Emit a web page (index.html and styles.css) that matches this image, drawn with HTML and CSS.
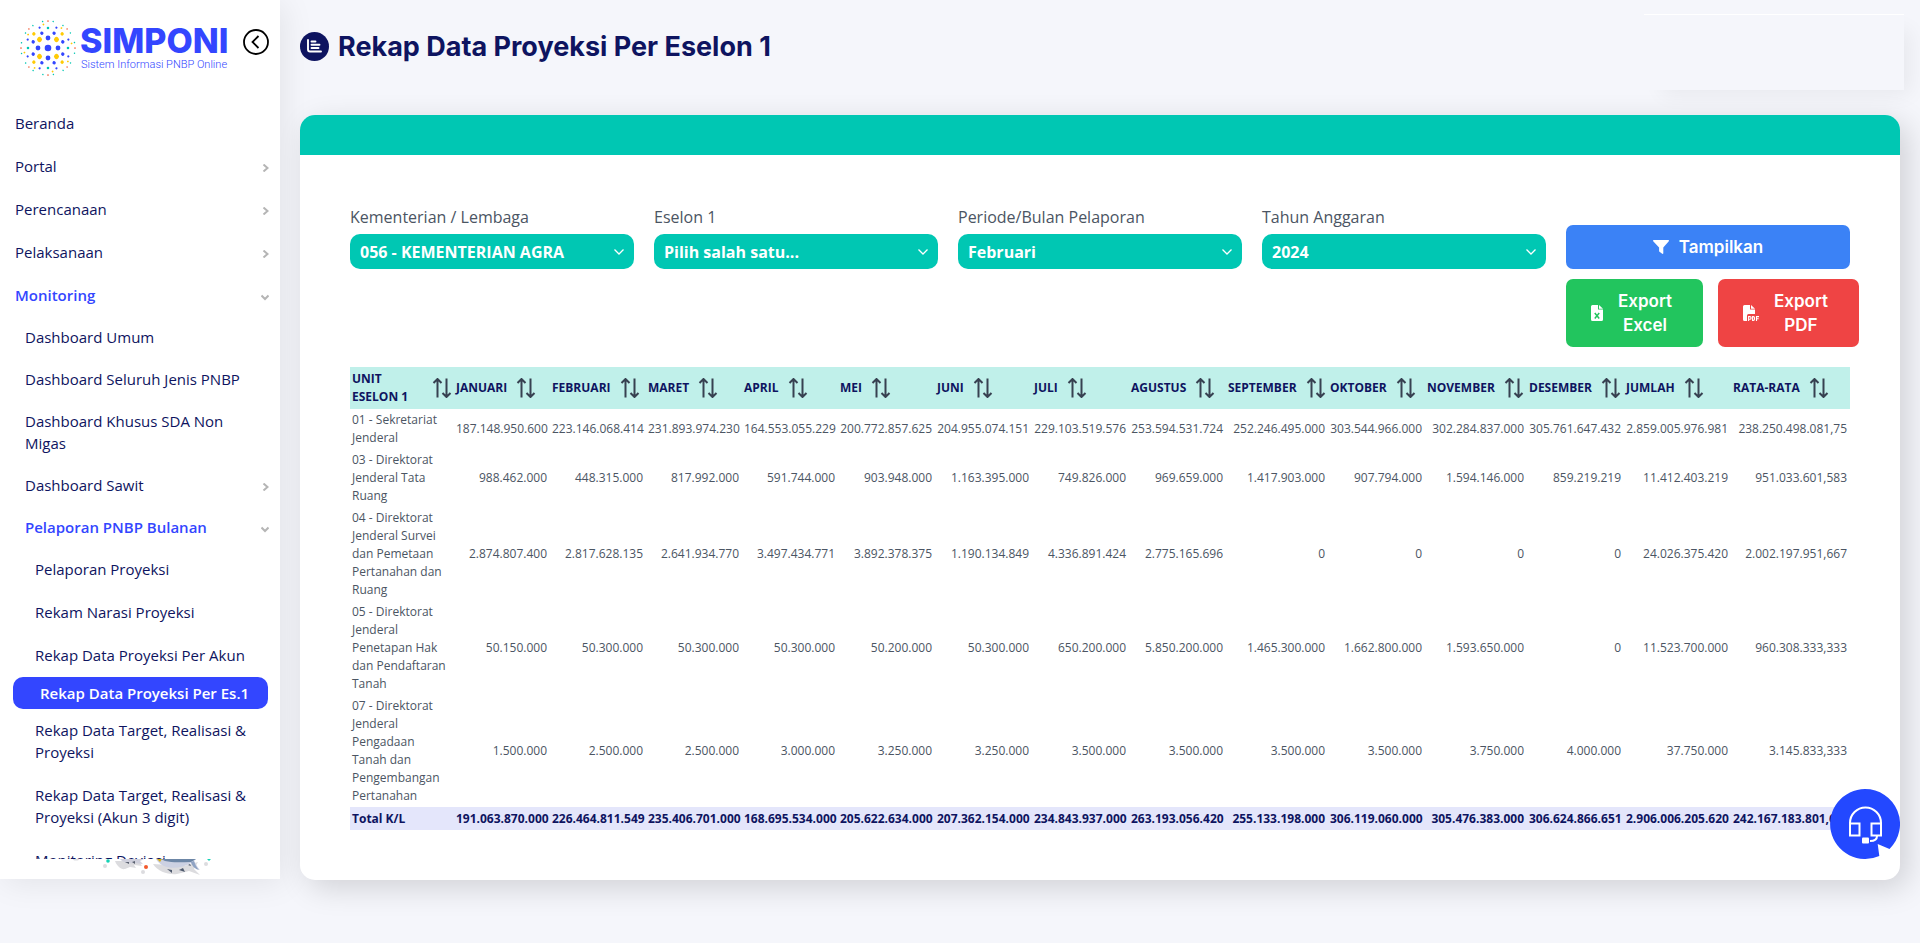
FILE: index.html
```html
<!DOCTYPE html>
<html lang="id">
<head>
    <meta charset="UTF-8">
    <meta name="viewport" content="width=device-width, initial-scale=1.0">
    <title>SIMPONI - Rekap Data Proyeksi Per Eselon 1</title>
    <link rel="stylesheet" href="styles.css">
</head>
<body>
    <!-- shared icons -->
    <svg class="sprite" aria-hidden="true">
        <symbol id="sort" viewBox="0 0 20 20">
            <path d="M5.500 19.500V1M1.500 5l4-4 4 4M14.500 .5V19M10.500 15l4 4 4-4" fill="none" stroke="currentColor" stroke-width="2"/>
        </symbol>
        <symbol id="right" viewBox="0 0 8 8">
            <path d="M2.500 .5 6.500 4 2.500 7.500" fill="none" stroke="currentColor" stroke-width="2"/>
        </symbol>
        <symbol id="down" viewBox="0 0 8 8">
            <path d="M.5 2.500 4 6 7.500 2.500" fill="none" stroke="currentColor" stroke-width="2"/>
        </symbol>
        <symbol id="caret" viewBox="0 0 12 12">
            <path d="M1.500 3.500 6 8l4.500-4.500" fill="none" stroke="currentColor" stroke-width="1.300"/>
        </symbol>
    </svg>

    <aside class="sidebar">
        <div class="brand">
            <svg class="brand-logo" viewBox="-29 -29 58 58" aria-hidden="true">
                <circle r="3.300" fill="#3346ff"/>
                <g class="dots">
                    <circle r="10" pathLength="4" stroke="#3346ff" stroke-width="4.800"/>
                    <circle r="12" pathLength="4" stroke="#ffcb05" stroke-width="5" transform="rotate(45)"/>
                    <circle r="16" pathLength="8" stroke="#3346ff" stroke-width="3.400" transform="rotate(22.500)"/>
                    <circle r="20" pathLength="4" stroke="#00c7b3" stroke-width="2.600"/>
                    <circle r="20" pathLength="4" stroke="#ffcb05" stroke-width="3.400" transform="rotate(45)"/>
                    <circle r="22" pathLength="8" stroke="#3346ff" stroke-width="2.200" transform="rotate(22.500)"/>
                    <circle r="24" pathLength="8" stroke="#ffcb05" stroke-width="1.800" transform="rotate(34)"/>
                    <circle r="27" pathLength="16" stroke="#00c7b3" stroke-width="1.500" transform="rotate(11)"/>
                    <circle r="27" pathLength="4" stroke="#f2603c" stroke-width="1.700"/>
                    <circle r="27" pathLength="4" stroke="#f2603c" stroke-width="1.500" transform="rotate(45)"/>
                </g>
            </svg>
            <div class="brand-text">
                <span class="brand-name">SIMPONI</span>
                <span class="brand-sub">Sistem Informasi PNBP Online</span>
            </div>
            <button class="toggle" type="button" aria-label="Tutup menu">
                <svg viewBox="0 0 26 26"><circle cx="13" cy="13" r="12" fill="none" stroke="#000" stroke-width="1.800"/><path d="M15.500 7 9.500 13l6 6" fill="none" stroke="#000" stroke-width="1.800"/></svg>
            </button>
        </div>

        <nav class="menu">
            <a href="#">Beranda</a>
            <a href="#">Portal <svg><use href="#right"/></svg></a>
            <a href="#">Perencanaan <svg><use href="#right"/></svg></a>
            <a href="#">Pelaksanaan <svg><use href="#right"/></svg></a>
            <a href="#" class="open">Monitoring <svg><use href="#down"/></svg></a>
            <div class="level-2">
                <a href="#">Dashboard Umum</a>
                <a href="#">Dashboard Seluruh Jenis PNBP</a>
                <a href="#">Dashboard Khusus SDA Non Migas</a>
                <a href="#">Dashboard Sawit <svg><use href="#right"/></svg></a>
                <a href="#" class="open">Pelaporan PNBP Bulanan <svg><use href="#down"/></svg></a>
            </div>
            <div class="level-3">
                <a href="#">Pelaporan Proyeksi</a>
                <a href="#">Rekam Narasi Proyeksi</a>
                <a href="#">Rekap Data Proyeksi Per Akun</a>
                <a href="#" class="active">Rekap Data Proyeksi Per Es.1</a>
                <a href="#">Rekap Data Target, Realisasi &amp; Proyeksi</a>
                <a href="#">Rekap Data Target, Realisasi &amp; Proyeksi (Akun 3 digit)</a>
                <a href="#">Monitoring Deviasi</a>
            </div>
        </nav>

        <div class="sea">
            <svg viewBox="0 0 150 20" aria-hidden="true">
                <g fill="#dcdcdf">
                    <ellipse cx="11" cy="0" rx="3" ry="1.500"/><circle cx="40" cy="7" r="2"/><circle cx="78" cy="13" r="2"/><circle cx="141" cy="5" r="2"/>
                    <path d="M50 2c2 5 6 9 10 8l5-2 6 1-2-3 8 1-3-5zM88 5c5 8 16 11 24 10l12-3 11 4-6-6 4-7-14 4z"/>
                </g>
                <path d="M55 0h24l-4 2 3 3-8-1c-6 1-12 0-15-4z" fill="#cfd0dc"/>
                <path d="M60 3l4 2v-2zM67 3l3 2v-3z" fill="#59606f"/>
                <path d="M91 0h40l-2 2c2 3 3 6 6 9-5-2-7-4-9-7-10 6-28 8-35-4z" fill="#ccd1e2"/>
                <path d="M96 0h35l-5 3c-8 0-18 1-26-1z" fill="#6c86a6"/>
                <path d="M126 3c1 4 4 7 8 8-3-3-4-6-5-9z" fill="#8fa3c3"/>
                <path d="M102 10l5 4v-3zM114 11l6 2-2-4zM123 6l3 1-1-2z" fill="#4f5a6e"/>
                <path d="M92 0h5l-2 3z" fill="#d8ad14"/>
                <circle cx="43" cy="2" r="1.800" fill="#16d3b6"/>
                <circle cx="81" cy="8" r="2" fill="#f25a2e"/>
                <path d="M142 0h4l-2 2z" fill="#16d3b6"/>
            </svg>
        </div>
    </aside>

    <main class="content">
        <header class="topbar">
            <h1>
                <svg class="title-icon" viewBox="0 0 29 29" aria-hidden="true">
                    <circle cx="14.500" cy="14.500" r="14.500" fill="#0e1460"/>
                    <path d="M8 8v9.500q0 2 2 2H21M11.500 9.500h4M11.500 12.700h8M11.500 16h7" fill="none" stroke="#fff" stroke-width="1.900" stroke-linecap="round"/>
                </svg>
                Rekap Data Proyeksi Per Eselon 1
            </h1>
            <div class="user-box"></div>
        </header>

        <section class="card">
            <div class="card-head"></div>
            <div class="card-body">
                <form class="filters">
                    <div class="field">
                        <label for="kl">Kementerian / Lembaga</label>
                        <div class="select">
                            <select id="kl"><option>056 - KEMENTERIAN AGRA</option></select>
                            <svg><use href="#caret"/></svg>
                        </div>
                    </div>
                    <div class="field">
                        <label for="eselon">Eselon 1</label>
                        <div class="select">
                            <select id="eselon"><option>Pilih salah satu...</option></select>
                            <svg><use href="#caret"/></svg>
                        </div>
                    </div>
                    <div class="field">
                        <label for="periode">Periode/Bulan Pelaporan</label>
                        <div class="select">
                            <select id="periode"><option>Februari</option></select>
                            <svg><use href="#caret"/></svg>
                        </div>
                    </div>
                    <div class="field">
                        <label for="tahun">Tahun Anggaran</label>
                        <div class="select">
                            <select id="tahun"><option>2024</option></select>
                            <svg><use href="#caret"/></svg>
                        </div>
                    </div>
                    <button class="btn btn-show" type="button">
                        <svg viewBox="0 0 16 16"><path d="M.7 1h14.600c.7 0 .9.7.5 1.200L10.300 8.500v5.800c0 .6-.6.8-1.100.5l-2.700-2a1 1 0 0 1-.4-.8V8.500L.2 2.200C-.2 1.700.1 1 .7 1z" fill="#fff"/></svg>
                        Tampilkan
                    </button>
                    <div class="exports">
                        <button class="btn btn-excel" type="button">
                            <svg viewBox="0 0 12 16"><path d="M1.500 0H7v4.500h5V14.500q0 1.500-1.500 1.500h-9Q0 16 0 14.500v-13Q0 0 1.500 0zM8 0l4 3.700H8z" fill="#fff"/><path d="M3.800 8l4.400 5.500M8.200 8l-4.400 5.500" stroke="#22c55e" stroke-width="1.500"/></svg>
                            <span>Export<br>Excel</span>
                        </button>
                        <button class="btn btn-pdf" type="button">
                            <svg viewBox="0 0 16 16"><path d="M1.500 0H7v4.500h5V9H5.500Q4 9 4 10.500V16H1.500Q0 16 0 14.500v-13Q0 0 1.500 0zM8 0l4 3.700H8z" fill="#fff"/><path d="M5.600 16v-4.400h1.200a1.200 1.200 0 0 1 0 2.700H5.600M9.600 11.600v3.800h.7q1.200 0 1.200-1.200v-1.400q0-1.200-1.200-1.200zM13.500 16v-4.400H16M13.500 13.700h2.200" fill="none" stroke="#fff" stroke-width="1.100"/></svg>
                            <span>Export<br>PDF</span>
                        </button>
                    </div>
                </form>

                <table>
                    <colgroup>
                        <col class="w-unit"><col span="4" class="w-month"><col span="4" class="w-month-lg">
                        <col class="w-wide"><col class="w-month-lg"><col class="w-wide"><col class="w-month-lg">
                        <col class="w-sum"><col>
                    </colgroup>
                    <thead>
                        <tr>
                            <th><div>UNIT ESELON 1 <svg><use href="#sort"/></svg></div></th>
                            <th><div>JANUARI <svg><use href="#sort"/></svg></div></th>
                            <th><div>FEBRUARI <svg><use href="#sort"/></svg></div></th>
                            <th><div>MARET <svg><use href="#sort"/></svg></div></th>
                            <th><div>APRIL <svg><use href="#sort"/></svg></div></th>
                            <th><div>MEI <svg><use href="#sort"/></svg></div></th>
                            <th><div>JUNI <svg><use href="#sort"/></svg></div></th>
                            <th><div>JULI <svg><use href="#sort"/></svg></div></th>
                            <th><div>AGUSTUS <svg><use href="#sort"/></svg></div></th>
                            <th><div>SEPTEMBER <svg><use href="#sort"/></svg></div></th>
                            <th><div>OKTOBER <svg><use href="#sort"/></svg></div></th>
                            <th><div>NOVEMBER <svg><use href="#sort"/></svg></div></th>
                            <th><div>DESEMBER <svg><use href="#sort"/></svg></div></th>
                            <th><div>JUMLAH <svg><use href="#sort"/></svg></div></th>
                            <th><div>RATA-RATA <svg><use href="#sort"/></svg></div></th>
                        </tr>
                    </thead>
                    <tbody>
                        <tr>
                            <td>01 - Sekretariat Jenderal</td>
                            <td>187.148.950.600</td><td>223.146.068.414</td><td>231.893.974.230</td><td>164.553.055.229</td>
                            <td>200.772.857.625</td><td>204.955.074.151</td><td>229.103.519.576</td><td>253.594.531.724</td>
                            <td>252.246.495.000</td><td>303.544.966.000</td><td>302.284.837.000</td><td>305.761.647.432</td>
                            <td>2.859.005.976.981</td><td>238.250.498.081,75</td>
                        </tr>
                        <tr>
                            <td>03 - Direktorat Jenderal Tata Ruang</td>
                            <td>988.462.000</td><td>448.315.000</td><td>817.992.000</td><td>591.744.000</td>
                            <td>903.948.000</td><td>1.163.395.000</td><td>749.826.000</td><td>969.659.000</td>
                            <td>1.417.903.000</td><td>907.794.000</td><td>1.594.146.000</td><td>859.219.219</td>
                            <td>11.412.403.219</td><td>951.033.601,583</td>
                        </tr>
                        <tr>
                            <td>04 - Direktorat Jenderal Survei dan Pemetaan Pertanahan dan Ruang</td>
                            <td>2.874.807.400</td><td>2.817.628.135</td><td>2.641.934.770</td><td>3.497.434.771</td>
                            <td>3.892.378.375</td><td>1.190.134.849</td><td>4.336.891.424</td><td>2.775.165.696</td>
                            <td>0</td><td>0</td><td>0</td><td>0</td>
                            <td>24.026.375.420</td><td>2.002.197.951,667</td>
                        </tr>
                        <tr>
                            <td>05 - Direktorat Jenderal Penetapan Hak dan Pendaftaran Tanah</td>
                            <td>50.150.000</td><td>50.300.000</td><td>50.300.000</td><td>50.300.000</td>
                            <td>50.200.000</td><td>50.300.000</td><td>650.200.000</td><td>5.850.200.000</td>
                            <td>1.465.300.000</td><td>1.662.800.000</td><td>1.593.650.000</td><td>0</td>
                            <td>11.523.700.000</td><td>960.308.333,333</td>
                        </tr>
                        <tr>
                            <td>07 - Direktorat Jenderal Pengadaan Tanah dan Pengembangan Pertanahan</td>
                            <td>1.500.000</td><td>2.500.000</td><td>2.500.000</td><td>3.000.000</td>
                            <td>3.250.000</td><td>3.250.000</td><td>3.500.000</td><td>3.500.000</td>
                            <td>3.500.000</td><td>3.500.000</td><td>3.750.000</td><td>4.000.000</td>
                            <td>37.750.000</td><td>3.145.833,333</td>
                        </tr>
                    </tbody>
                    <tfoot>
                        <tr>
                            <td>Total K/L</td>
                            <td>191.063.870.000</td><td>226.464.811.549</td><td>235.406.701.000</td><td>168.695.534.000</td>
                            <td>205.622.634.000</td><td>207.362.154.000</td><td>234.843.937.000</td><td>263.193.056.420</td>
                            <td>255.133.198.000</td><td>306.119.060.000</td><td>305.476.383.000</td><td>306.624.866.651</td>
                            <td>2.906.006.205.620</td><td>242.167.183.801,667</td>
                        </tr>
                    </tfoot>
                </table>
            </div>
        </section>
    </main>

    <button class="help" type="button" aria-label="Bantuan">
        <svg viewBox="0 0 70 70">
            <path d="M35 0a35 35 0 0 1 24.500 60L47.700 55l1.600 12A35 35 0 1 1 35 0z" fill="#2348ff"/>
            <g fill="none" stroke="#fff" stroke-width="2">
                <path d="M20 35v-1a15.500 15.500 0 0 1 31 0v1"/>
                <path d="M20 34.500h9.500v12H20zM41.500 34.500H51v12h-9.500z"/>
                <path d="M47 47q0 5-7 5"/>
            </g>
            <rect x="32" y="48.500" width="7" height="6" rx="1" fill="#fff"/>
        </svg>
    </button>
</body>
</html>
```
FILE: styles.css
```css
* {
    box-sizing: border-box;
}

body {
    margin: 0;
    min-height: 100vh;
    display: flex;
    align-items: flex-start;
    background: #f5f6fb;
    color: #4b5563;
    font-family: 'Open Sans', 'Noto Sans', sans-serif;
    font-size: 16px;
}

.sprite {
    position: absolute;
    width: 0;
    height: 0;
}

a {
    text-decoration: none;
}

button {
    border: none;
    padding: 0;
    cursor: pointer;
}

/* Sidebar */
.sidebar {
    flex: none;
    width: 280px;
    height: calc(100vh - 64px);
    display: flex;
    flex-direction: column;
    background: #fff;
    box-shadow: 4px 4px 30px rgba(0, 0, 0, 0.08);
}

.brand {
    flex: none;
    display: flex;
    height: 102px;
    padding: 19px 11px 0 19px;
}

.brand-logo {
    width: 58px;
    height: 58px;
}

.dots circle {
    fill: none;
    stroke-linecap: round;
    stroke-dasharray: 0 1;
}

.brand-text {
    flex: 1;
    padding: 5px 0 0 3px;
    display: flex;
    flex-direction: column;
    white-space: nowrap;
    color: #3346ff;
}

.brand-name {
    font-family: Inter, sans-serif;
    font-size: 34px;
    font-weight: 800;
    line-height: 34px;
}

.brand-sub {
    padding-left: 1px;
    font-family: Roboto, sans-serif;
    font-size: 11px;
    font-weight: 300;
    line-height: 14px;
}

.toggle {
    width: 26px;
    height: 26px;
    margin-top: 10px;
    background: none;
}

.toggle svg {
    display: block;
}

.menu {
    flex: 1;
    overflow: hidden;
}

.menu a {
    display: flex;
    justify-content: space-between;
    align-items: center;
    padding: 10px 24px 11px 15px;
    font-size: 15px;
    line-height: 22px;
    color: #0e1460;
}

.menu svg {
    flex: none;
    width: 8px;
    height: 8px;
    margin: 3px -13px 0 0;
    color: #b5b5b5;
}

.menu a.open {
    padding-bottom: 10px;
    color: #3346ff;
    font-weight: 600;
}

.menu .level-2 a {
    padding: 10px 24px 10px 25px;
}

.menu .level-3 a {
    padding-left: 35px;
}

.menu .level-3 a.active {
    margin: 0 12px 0 13px;
    padding: 5px 0 5px 27px;
    border-radius: 10px;
    background: #3346ff;
    color: #fff;
    font-weight: 600;
}

.sea {
    flex: none;
    height: 20px;
    padding-left: 65px;
}

.sea svg {
    display: block;
    width: 150px;
    height: 20px;
}

/* Content */
.content {
    flex: 1;
    min-width: 0;
    padding: 0 20px 63px;
}

.topbar {
    display: flex;
    justify-content: space-between;
    height: 115px;
}

h1 {
    display: flex;
    align-items: center;
    gap: 9px;
    height: 36px;
    margin: 28px 0 0;
    font-family: Inter, sans-serif;
    font-size: 27px;
    font-weight: 700;
    color: #0e1460;
}

.title-icon {
    width: 29px;
    height: 29px;
}

.user-box {
    width: 260px;
    height: 76px;
    margin: 14px -4px 0 0;
    border-top: 1px solid #fff;
    background: #f5f6fb;
    box-shadow: 12px 10px 20px -6px rgba(0, 0, 0, 0.06);
}

.card {
    border-radius: 15px;
    background: #fff;
    box-shadow: 8px 8px 30px rgba(0, 0, 0, 0.15);
}

.card-head {
    height: 40px;
    border-radius: 15px 15px 0 0;
    background: #00c7b3;
}

.card-body {
    padding: 50px;
}

.filters {
    display: grid;
    grid-template-columns: repeat(5, minmax(0, 1fr));
    gap: 10px 20px;
    align-items: end;
    margin-bottom: 20px;
}

.field label {
    display: block;
    margin-bottom: 5px;
    line-height: 24px;
}

.select {
    position: relative;
}

.select select {
    display: block;
    width: 100%;
    height: 35px;
    padding: 0 32px 0 10px;
    appearance: none;
    border: none;
    border-radius: 10px;
    background: #00c7b3;
    color: #fff;
    font-family: inherit;
    font-size: 16px;
    font-weight: 700;
}

.select svg {
    position: absolute;
    right: 9px;
    top: 12px;
    width: 12px;
    height: 12px;
    color: #fff;
    pointer-events: none;
}

.btn {
    display: flex;
    align-items: center;
    justify-content: center;
    border-radius: 7px;
    color: #fff;
    font-family: Inter, sans-serif;
    font-size: 17px;
    font-weight: 600;
    line-height: 24px;
}

.btn svg {
    flex: none;
    width: 16px;
    height: 16px;
}

.btn-show {
    height: 44px;
    gap: 10px;
    background: #3b82f6;
}

.exports {
    grid-column: 5;
    display: flex;
    gap: 15px;
}

.exports .btn {
    flex: none;
    padding: 10px 31px 10px 25px;
    gap: 15px;
}

.btn-excel {
    background: #22c55e;
}

.exports .btn-excel svg {
    width: 12px;
}

.btn-pdf {
    background: #ef4444;
}

/* Table */
table {
    width: 100%;
    table-layout: fixed;
    border-collapse: collapse;
    font-size: 12px;
    line-height: 18px;
}

.w-unit {
    width: 104px;
}

.w-month {
    width: 96px;
}

.w-month-lg {
    width: 97px;
}

.w-wide {
    width: 102px;
}

.w-sum {
    width: 107px;
}

th {
    padding: 3px 2px;
    background: #c0f0ea;
    color: #0e1460;
    font-weight: 700;
    text-align: left;
}

th div {
    display: flex;
    align-items: center;
}

th svg {
    flex: none;
    width: 20px;
    height: 20px;
    margin-left: 9px;
    color: #374151;
}

td {
    padding: 2px 3px 2px 2px;
    text-align: right;
    white-space: nowrap;
}

td:first-child {
    text-align: left;
    white-space: normal;
}

tfoot td {
    padding-top: 3px;
    background: #e4e6fb;
    color: #0e1460;
    font-weight: 700;
}

.help {
    position: fixed;
    right: 20px;
    bottom: 84px;
    width: 70px;
    height: 70px;
    border-radius: 50%;
    background: none;
}

.help svg {
    display: block;
}
```
